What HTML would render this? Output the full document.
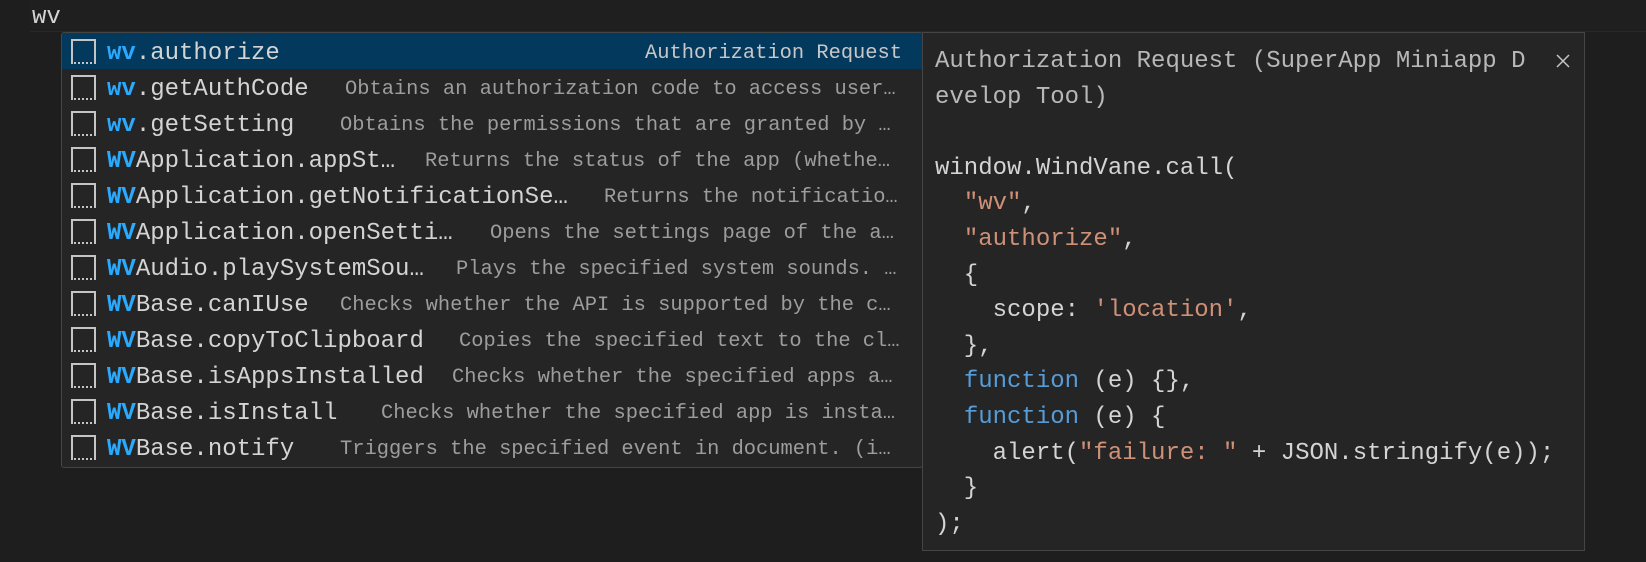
<!DOCTYPE html>
<html><head><meta charset="utf-8"><style>
html,body{margin:0;padding:0;background:#1e1e1e;width:1646px;height:562px;overflow:hidden;font-family:"Liberation Mono",monospace;}
.top{position:absolute;left:30px;top:0;width:1616px;height:31px;background:#1f1f1f;border-bottom:1px solid #282828;}
.wv{position:absolute;left:32px;top:4px;font-size:24px;color:#d4d4d4;line-height:28px;}
.list{position:absolute;left:61px;top:32px;width:860px;height:434px;background:#252526;border:1px solid #454545;border-radius:3px;overflow:hidden;}
.row{position:absolute;left:0;width:860px;height:36px;}
.row.sel{background:#04395e;}
.ic{position:absolute;left:9px;top:6px;width:25px;height:25px;border:2px solid #c5c5c5;border-bottom:2px dotted #c5c5c5;box-sizing:border-box;}
.lab{position:absolute;left:45px;top:3px;line-height:36px;font-size:24px;color:#d4d4d4;white-space:pre;}
.lab b{color:#2aaaff;}
.desc{position:absolute;top:3px;line-height:36px;font-size:20.4px;color:#9d9d9d;white-space:pre;}
.sel .desc{color:#c8c8c8;right:20px;}
.det{position:absolute;left:922px;top:32px;width:663px;height:519px;background:#252526;border:1px solid #454545;box-sizing:border-box;}
.det pre{margin:0;position:absolute;left:12px;top:11px;font-family:"Liberation Mono",monospace;font-size:24px;line-height:35.6px;color:#d4d4d4;}
.t{color:#b8b8b8;}
.s{color:#ce9178;}
.k{color:#569cd6;}
.x{position:absolute;left:632px;top:20px;width:16px;height:16px;}
</style></head><body>
<div class="top"></div>
<div class="wv">wv</div>
<div class="list">
<div class="row sel" style="top:0"><div class="ic"></div><div class="lab"><b>wv</b>.authorize</div><div class="desc">Authorization Request</div></div>
<div class="row" style="top:36px"><div class="ic"></div><div class="lab"><b>wv</b>.getAuthCode</div><div class="desc" style="left:283px">Obtains an authorization code to access user…</div></div>
<div class="row" style="top:72px"><div class="ic"></div><div class="lab"><b>wv</b>.getSetting</div><div class="desc" style="left:278px">Obtains the permissions that are granted by …</div></div>
<div class="row" style="top:108px"><div class="ic"></div><div class="lab"><b>WV</b>Application.appSt…</div><div class="desc" style="left:363px">Returns the status of the app (whethe…</div></div>
<div class="row" style="top:144px"><div class="ic"></div><div class="lab"><b>WV</b>Application.getNotificationSe…</div><div class="desc" style="left:542px">Returns the notificatio…</div></div>
<div class="row" style="top:180px"><div class="ic"></div><div class="lab"><b>WV</b>Application.openSetti…</div><div class="desc" style="left:428px">Opens the settings page of the a…</div></div>
<div class="row" style="top:216px"><div class="ic"></div><div class="lab"><b>WV</b>Audio.playSystemSou…</div><div class="desc" style="left:394px">Plays the specified system sounds. …</div></div>
<div class="row" style="top:252px"><div class="ic"></div><div class="lab"><b>WV</b>Base.canIUse</div><div class="desc" style="left:278px">Checks whether the API is supported by the c…</div></div>
<div class="row" style="top:288px"><div class="ic"></div><div class="lab"><b>WV</b>Base.copyToClipboard</div><div class="desc" style="left:397px">Copies the specified text to the cl…</div></div>
<div class="row" style="top:324px"><div class="ic"></div><div class="lab"><b>WV</b>Base.isAppsInstalled</div><div class="desc" style="left:390px">Checks whether the specified apps a…</div></div>
<div class="row" style="top:360px"><div class="ic"></div><div class="lab"><b>WV</b>Base.isInstall</div><div class="desc" style="left:319px">Checks whether the specified app is insta…</div></div>
<div class="row" style="top:396px"><div class="ic"></div><div class="lab"><b>WV</b>Base.notify</div><div class="desc" style="left:278px">Triggers the specified event in document. (i…</div></div>
</div>
<div class="det">
<pre><span class="t">Authorization Request (SuperApp Miniapp D
evelop Tool)</span>

window.WindVane.call(
  <span class="s">"wv"</span>,
  <span class="s">"authorize"</span>,
  {
    scope: <span class="s">'location'</span>,
  },
  <span class="k">function</span> (e) {},
  <span class="k">function</span> (e) {
    alert(<span class="s">"failure: "</span> + JSON.stringify(e));
  }
);</pre>
<svg class="x" viewBox="0 0 16 16"><path d="M2 2L14 14M14 2L2 14" stroke="#c5c5c5" stroke-width="1.5"/></svg>
</div>
</body></html>
